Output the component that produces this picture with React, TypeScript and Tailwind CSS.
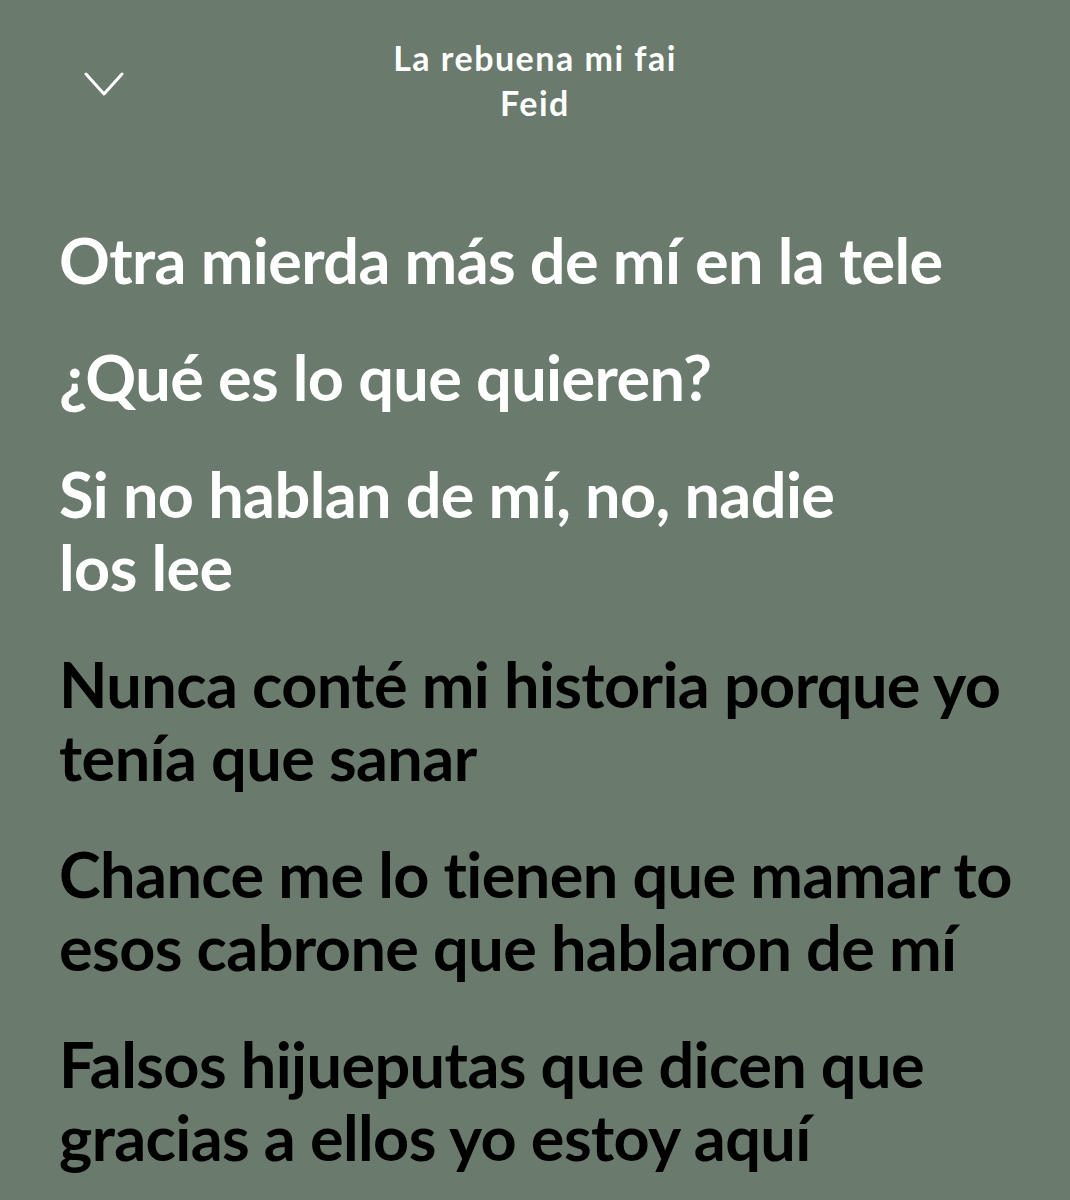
import React from "react";

const paragraphs: { lines: string[]; active: boolean }[] = [
  { lines: ["Otra mierda más de mí en la tele"], active: true },
  { lines: ["¿Qué es lo que quieren?"], active: true },
  { lines: ["Si no hablan de mí, no, nadie", "los lee"], active: true },
  { lines: ["Nunca conté mi historia porque yo", "tenía que sanar"], active: false },
  { lines: ["Chance me lo tienen que mamar to", "esos cabrone que hablaron de mí"], active: false },
  { lines: ["Falsos hijueputas que dicen que", "gracias a ellos yo estoy aquí"], active: false },
];

export default function App() {
  return (
    <div
      className="w-[1070px] h-[1200px] overflow-hidden bg-[#6a7a6d]"
      style={{ fontFamily: "Lato, 'Noto Sans', sans-serif" }}
    >
      <header className="relative h-[130px]">
        <div className="absolute left-[84px] top-[70px]">
          <svg width="40" height="28" viewBox="0 0 40 28" fill="none">
            <path d="M2 4 L20 24 L38 4" stroke="white" strokeWidth="3" strokeLinecap="round" strokeLinejoin="round" />
          </svg>
        </div>
        <div className="pt-[35px] text-center text-white font-bold text-[34px] leading-[45px] tracking-[1.5px]">
          <div>La rebuena mi fai</div>
          <div>Feid</div>
        </div>
      </header>
      <main className="pl-[59px] pt-[93px] flex flex-col gap-[44px]">
        {paragraphs.map((p, i) => (
          <div
            key={i}
            className={`font-bold text-[63px] leading-[73px] tracking-[-0.6px] whitespace-nowrap ${p.active ? "text-white" : "text-black"}`}
          >
            {p.lines.map((l, j) => (
              <div key={j}>{l}</div>
            ))}
          </div>
        ))}
      </main>
    </div>
  );
}
